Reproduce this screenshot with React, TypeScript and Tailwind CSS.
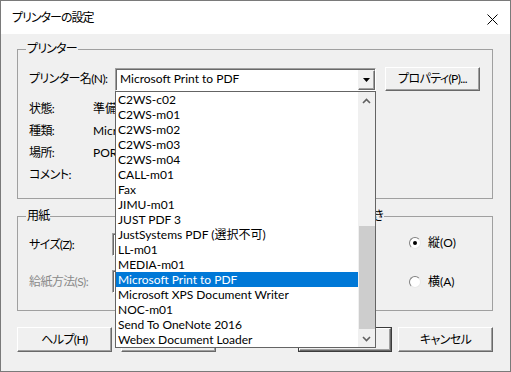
import React from 'react';

const printers: string[] = [
    'C2WS-c02',
    'C2WS-m01',
    'C2WS-m02',
    'C2WS-m03',
    'C2WS-m04',
    'CALL-m01',
    'Fax',
    'JIMU-m01',
    'JUST PDF 3',
    'JustSystems PDF (選択不可)',
    'LL-m01',
    'MEDIA-m01',
    'Microsoft Print to PDF',
    'Microsoft XPS Document Writer',
    'NOC-m01',
    'Send To OneNote 2016',
    'Webex Document Loader',
];

const SELECTED = 'Microsoft Print to PDF';

function Chevron({ up }: { up?: boolean }): React.ReactElement {
    return (
        <svg width="9" height="6" viewBox="0 0 9 6">
            <path
                d={up ? 'M1 5 L4.5 1.5 L8 5' : 'M1 1 L4.5 4.5 L8 1'}
                fill="none"
                stroke="#606060"
                strokeWidth="1.6"
            />
        </svg>
    );
}

function Button({ children, className = '' }: { children?: React.ReactNode; className?: string }): React.ReactElement {
    return (
        <div
            className={`flex items-center justify-center bg-[#f0f0f0] border border-t-white border-l-white border-r-[#696969] border-b-[#696969] shadow-[inset_-1px_-1px_0_#a0a0a0] ${className}`}
        >
            {children}
        </div>
    );
}

function SunkenCombo({ text, className = '' }: { text?: string; className?: string }): React.ReactElement {
    return (
        <div
            className={`flex h-[23px] bg-white border border-t-[#a0a0a0] border-l-[#a0a0a0] border-r-white border-b-white shadow-[inset_1px_1px_0_#696969] ${className}`}
        >
            <div className="flex-1 pl-[4px] leading-[20px] truncate">{text}</div>
            <div className="mt-[1px] w-[17px] h-[20px] flex items-center justify-center bg-[#f0f0f0] border border-t-[#f0f0f0] border-l-[#f0f0f0] border-r-[#696969] border-b-[#696969] shadow-[inset_-1px_-1px_0_#a0a0a0]">
                <svg width="7" height="4" viewBox="0 0 7 4">
                    <path d="M0 0 H7 L3.5 4 Z" fill="#000" />
                </svg>
            </div>
        </div>
    );
}

function GroupBox({
    label,
    className = '',
    labelClass = 'left-[8px]',
    children,
}: {
    label: string;
    className?: string;
    labelClass?: string;
    children: React.ReactNode;
}): React.ReactElement {
    return (
        <div className={`relative border border-[#a0a0a0] ${className}`}>
            <span className={`absolute -top-[9px] px-[1px] bg-[#f0f0f0] leading-[16px] tracking-[-0.8px] ${labelClass}`}>{label}</span>
            {children}
        </div>
    );
}

function Radio({ checked, label }: { checked?: boolean; label: string }): React.ReactElement {
    return (
        <div className="flex items-center h-[23px] pl-[87px]">
            <div className="w-[12px] h-[12px] rounded-full bg-white border border-t-[#808080] border-l-[#808080] border-r-[#e8e8e8] border-b-[#e8e8e8] flex items-center justify-center">
                {checked && <div className="w-[4px] h-[4px] rounded-full bg-black" />}
            </div>
            <span className="ml-[7px]">{label}</span>
        </div>
    );
}

export default function App(): React.ReactElement {
    return (
        <div className="relative w-[511px] h-[372px] flex flex-col border border-[#7a7a7a] bg-[#f0f0f0] text-black text-[12px] font-['Lato','Noto_Sans_CJK_JP',sans-serif] [font-feature-settings:'palt'] overflow-hidden">
            {/* title bar */}
            <div className="h-[33px] flex-shrink-0 bg-white flex items-center justify-between pl-[11px] pr-[12px]">
                <span className="leading-[16px] mt-[1px] tracking-[-1px]">プリンターの設定</span>
                <svg width="11" height="11" viewBox="0 0 11 11" className="mt-[3px]">
                    <path d="M0.5 0.5 L10.5 10.5 M10.5 0.5 L0.5 10.5" stroke="#000" strokeWidth="1" />
                </svg>
            </div>

            <div className="flex-1 pl-[16px] pr-[17px] pt-[15px]">
                {/* printer group */}
                <GroupBox label="プリンター" className="h-[150px] pl-[11px] pt-[17px]">
                    <div className="flex items-center h-[24px]">
                        <span className="w-[86px] tracking-[-0.6px]">プリンター名(N):</span>
                        <SunkenCombo text="Microsoft Print to PDF" className="w-[261px]" />
                        <Button className="ml-[9px] w-[95px] h-[24px] tracking-[-0.6px]">プロパティ(P)...</Button>
                    </div>
                    <div className="mt-[7px]">
                        {[
                            ['状態:', '準備完了'],
                            ['種類:', 'Microsoft Print To PDF'],
                            ['場所:', 'PORTPROMPT:'],
                            ['コメント:', ''],
                        ].map(([k, v]) => (
                            <div key={k} className="flex items-center h-[22px]">
                                <span className="w-[64px] tracking-[-0.6px]">{k}</span>
                                <span className="w-[22px] overflow-hidden whitespace-nowrap">{v}</span>
                            </div>
                        ))}
                    </div>
                </GroupBox>

                {/* paper + orientation */}
                <div className="flex mt-[17px]">
                    <GroupBox label="用紙" className="w-[295px] h-[95px] pl-[11px] pt-[16px]">
                        <div className="flex items-center">
                            <span className="w-[83px] tracking-[-0.6px]">サイズ(Z):</span>
                            <SunkenCombo className="w-[190px]" />
                        </div>
                        <div className="flex items-center mt-[14px] text-[#8a8a8a]">
                            <span className="w-[83px] tracking-[-0.6px]">給紙方法(S):</span>
                            <SunkenCombo className="w-[190px]" />
                        </div>
                    </GroupBox>
                    <GroupBox label="印刷の向き" className="ml-[9px] w-[172px] h-[95px] pt-[14px]" labelClass="left-[6px]">
                        <Radio checked label="縦(O)" />
                        <div className="mt-[16px]">
                            <Radio label="横(A)" />
                        </div>
                    </GroupBox>
                </div>

                {/* buttons */}
                <div className="flex mt-[16px] h-[25px]">
                    <Button className="w-[95px] tracking-[-0.6px]">ヘルプ(H)</Button>
                    <Button className="ml-[9px] w-[95px]" />
                    <div className="ml-[82px] w-[95px] border border-[#3c3c3c] flex">
                        <Button className="flex-1" />
                    </div>
                    <Button className="ml-[6px] w-[95px] tracking-[-0.6px]">キャンセル</Button>
                </div>
            </div>

            {/* open dropdown list */}
            <div className="absolute left-[114px] top-[90px] w-[261px] h-[257px] border border-[#646464] bg-white flex">
                <div className="flex-1">
                    {printers.map((p) => (
                        <div
                            key={p}
                            className={`h-[15px] leading-[15px] pl-[2px] whitespace-nowrap ${
                                p === SELECTED ? 'bg-[#0078d7] text-white' : ''
                            }`}
                        >
                            {p}
                        </div>
                    ))}
                </div>
                <div className="w-[17px] flex flex-col bg-[#f0f0f0]">
                    <div className="h-[17px] flex items-center justify-center">
                        <Chevron up />
                    </div>
                    <div className="flex-1 pl-[1px]">
                        <div className="mt-[117px] h-[103px] bg-[#cdcdcd]" />
                    </div>
                    <div className="h-[17px] flex items-center justify-center">
                        <Chevron />
                    </div>
                </div>
            </div>
        </div>
    );
}
